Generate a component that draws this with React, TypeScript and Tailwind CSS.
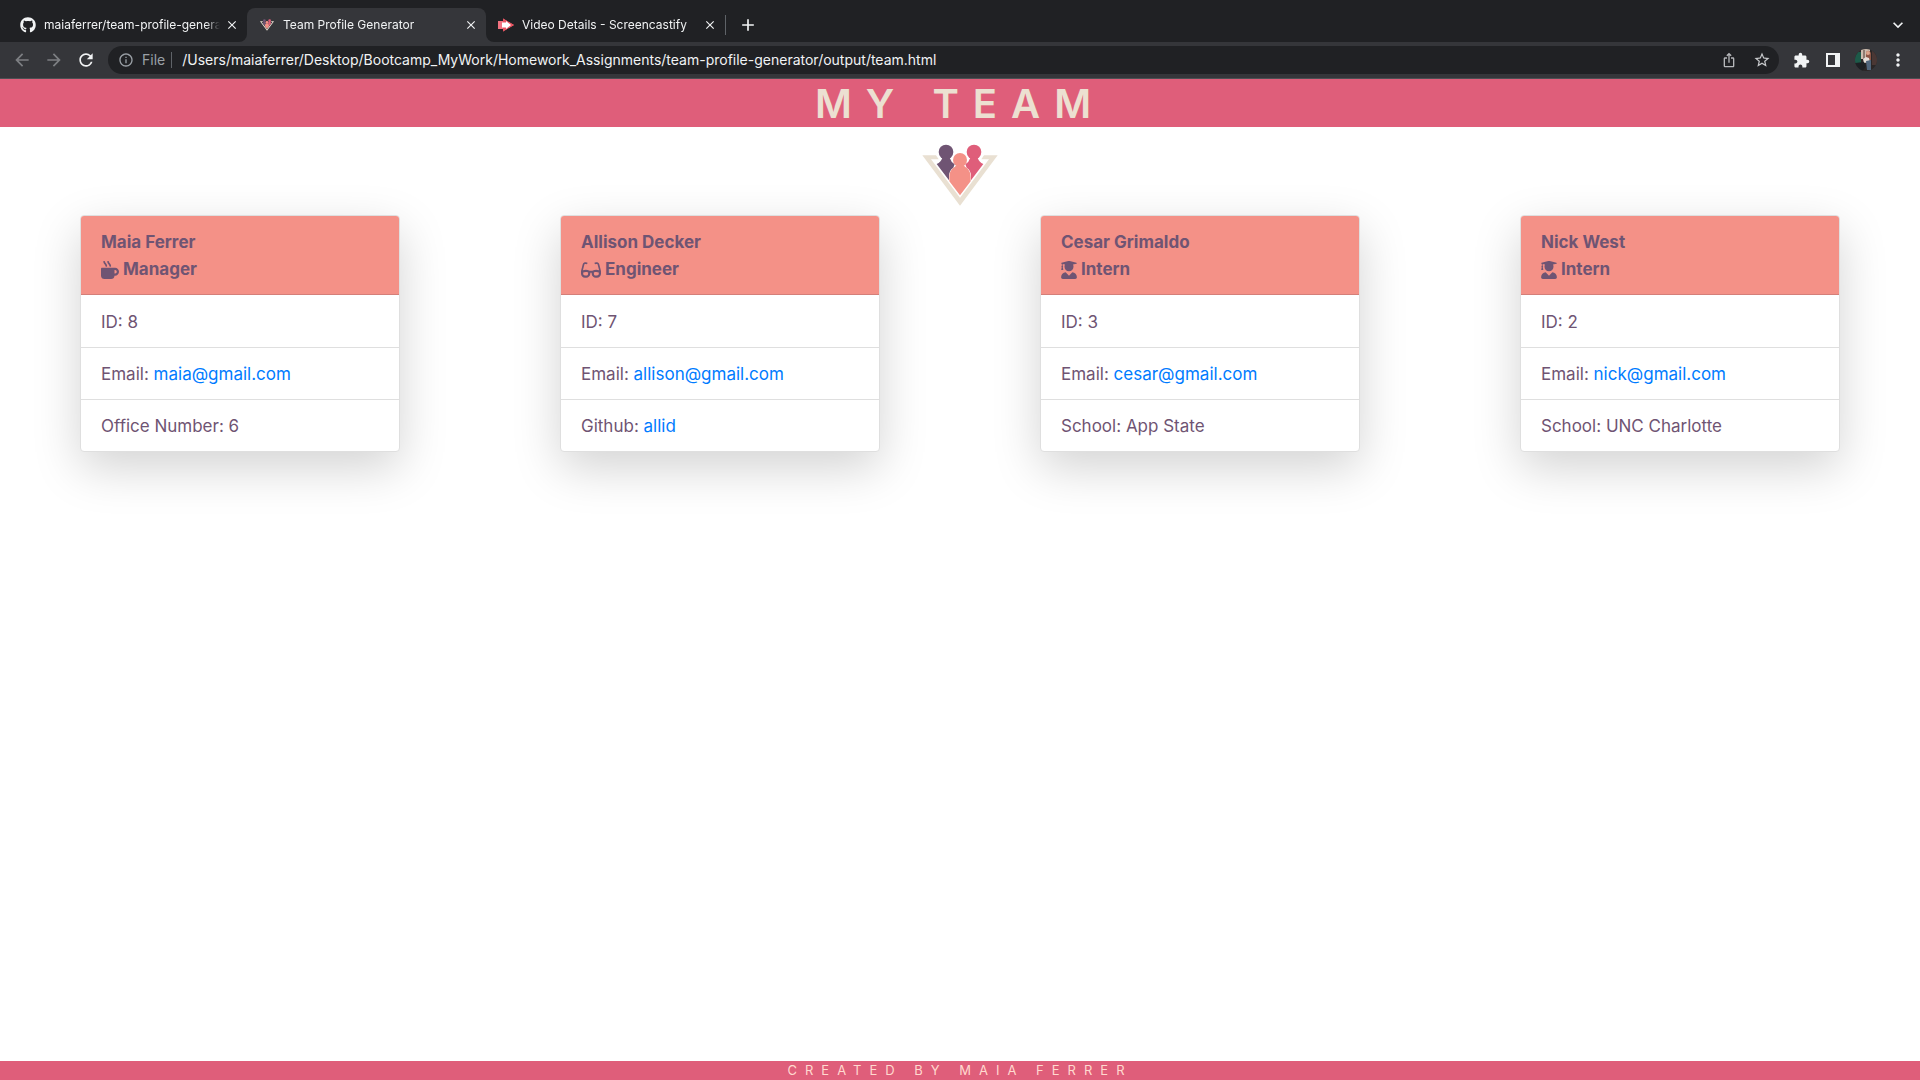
import React from "react";
import { FaGithub, FaMugHot, FaGlasses, FaUserGraduate } from "react-icons/fa";
import {
  MdAdd,
  MdArrowBack,
  MdArrowForward,
  MdClose,
  MdExtension,
  MdInfoOutline,
  MdIosShare,
  MdKeyboardArrowDown,
  MdMoreVert,
  MdRefresh,
  MdStarOutline,
} from "react-icons/md";

type Member = {
  name: string;
  role: "Manager" | "Engineer" | "Intern";
  id: number;
  email: string;
  label: string;
  value: string;
  link?: boolean;
};

const members: Member[] = [
  { name: "Maia Ferrer", role: "Manager", id: 8, email: "maia@gmail.com", label: "Office Number", value: "6" },
  { name: "Allison Decker", role: "Engineer", id: 7, email: "allison@gmail.com", label: "Github", value: "allid", link: true },
  { name: "Cesar Grimaldo", role: "Intern", id: 3, email: "cesar@gmail.com", label: "School", value: "App State" },
  { name: "Nick West", role: "Intern", id: 2, email: "nick@gmail.com", label: "School", value: "UNC Charlotte" },
];

const roleIcons = {
  Manager: <FaMugHot className="h-[18px] w-[18px]" />,
  Engineer: <FaGlasses className="h-[18px] w-5" />,
  Intern: <FaUserGraduate className="h-[18px] w-4" />,
};

function TeamLogo({ className }: { className: string }) {
  return (
    <svg viewBox="420 200 240 192" className={className} aria-hidden="true">
      <path
        d="M427 237H468L476 249H453L540 364L627 249H604L612 237H653L540 388Z"
        fill="#e9e0d2"
      />
      <circle cx="498" cy="227" r="22" fill="#6f5473" />
      <path d="M470 263Q483 257 487 244H509Q513 257 524 264L520 274Q507 282 507 300V312Z" fill="#6f5473" />
      <circle cx="582" cy="227" r="22" fill="#df5e7a" />
      <path d="M610 263Q597 257 593 244H571Q567 257 556 264L560 274Q573 282 573 300V312Z" fill="#df5e7a" />
      <circle cx="540" cy="251" r="21" fill="#f49187" />
      <path
        d="M529 267C525 274 508 277 508 303V315L540 357L572 315V303C572 277 555 274 551 267Z"
        fill="#f49187"
      />
    </svg>
  );
}

function ScreencastIcon() {
  return (
    <svg viewBox="0 0 16 16" className="size-4" aria-hidden="true">
      <path d="M0 4h5V1.500L16 8 5 14.500V12H0Z" fill="#f27280" />
      <path d="M5 1.500L16 8 5 14.500Z" fill="#e8525f" />
      <path d="M4 5.500h4V4l5 4-5 4v-1.500H4Z" fill="#fff" />
    </svg>
  );
}

function Avatar() {
  return (
    <svg viewBox="0 0 22 22" className="size-[22px] rounded-full" aria-hidden="true">
      <rect width="22" height="22" fill="#2b2626" />
      <rect y="3" width="6" height="11" fill="#1d5a49" />
      <rect x="6" width="9" height="10" fill="#cdbcae" />
      <rect x="8" y="1" width="2" height="9" fill="#8d7a70" />
      <path d="M11 3q3-3 5 1v7h-5z" fill="#8e5646" />
      <circle cx="13" cy="4" r="2" fill="#dba48c" />
      <path d="M8 10l3-2 3 1 1 4-6 1z" fill="#e6ded8" />
      <path d="M11 12l5-1v10h-4z" fill="#50657c" />
      <path d="M0 14l9-1 2 4-4 6H0z" fill="#1d2024" />
      <rect x="17" y="2" width="5" height="14" fill="#4a3734" />
    </svg>
  );
}

function Tab({ icon, title, active = false }: { icon: React.ReactNode; title: string; active?: boolean }) {
  return (
    <div
      className={
        active
          ? "relative flex h-[34px] w-[239px] items-center rounded-t-lg bg-[#35363a] pl-3 pr-[7px]"
          : "relative flex h-[34px] w-[239px] items-center pl-3 pr-[7px]"
      }
    >
      {active && (
        <>
          <span className="absolute bottom-0 -left-2 size-2 bg-[#35363a]">
            <span className="block size-2 rounded-br-lg bg-[#202124]" />
          </span>
          <span className="absolute bottom-0 -right-2 size-2 bg-[#35363a]">
            <span className="block size-2 rounded-bl-lg bg-[#202124]" />
          </span>
        </>
      )}
      <button type="button" className="flex min-w-0 flex-1 items-center gap-2 text-left">
        <span className="flex size-4 shrink-0 items-center justify-center">{icon}</span>
        <span className="min-w-0 flex-1 whitespace-nowrap text-xs mask-r-from-92%">{title}</span>
      </button>
      <button type="button" aria-label={`Close ${title}`} className="ml-1 flex size-4 items-center justify-center">
        <MdClose className="size-3.5" />
      </button>
    </div>
  );
}

function BrowserChrome() {
  return (
    <div className="bg-[#202124] text-[#f1f3f4]">
      <div className="flex h-[42px] items-end pl-2 pr-3">
        <Tab icon={<FaGithub className="size-4" />} title="maiaferrer/team-profile-genera" />
        <Tab active icon={<TeamLogo className="h-3 w-4" />} title="Team Profile Generator" />
        <Tab icon={<ScreencastIcon />} title="Video Details - Screencastify" />
        <div className="flex h-[34px] flex-1 items-center">
          <span className="h-5 w-px bg-[#5f6368]" />
          <button type="button" aria-label="New tab" className="ml-3 flex size-5 items-center justify-center">
            <MdAdd className="size-5" />
          </button>
          <button type="button" aria-label="Search tabs" className="ml-auto flex size-5 items-center justify-center">
            <MdKeyboardArrowDown className="size-5" />
          </button>
        </div>
      </div>
      <div className="flex h-[37px] items-center border-b border-[#4e4f53] bg-[#35363a] pl-3 pr-3">
        <div className="flex gap-3">
          <button type="button" aria-label="Back" className="text-[#7d7f83]">
            <MdArrowBack className="size-5" />
          </button>
          <button type="button" aria-label="Forward" className="text-[#7d7f83]">
            <MdArrowForward className="size-5" />
          </button>
          <button type="button" aria-label="Reload">
            <MdRefresh className="size-5" />
          </button>
        </div>
        <div className="ml-3 flex h-7 min-w-0 flex-1 items-center rounded-full bg-[#202124] pl-2.5 pr-2">
          <MdInfoOutline className="size-4 text-[#9aa0a6]" />
          <label htmlFor="address" className="ml-2 text-[14px] leading-5 text-[#9aa0a6]">
            File
          </label>
          <span className="ml-1.5 h-4 w-px bg-[#5f6368]" />
          <input
            id="address"
            type="text"
            defaultValue="/Users/maiaferrer/Desktop/Bootcamp_MyWork/Homework_Assignments/team-profile-generator/output/team.html"
            className="ml-2.5 min-w-0 flex-1 bg-transparent text-[14px] leading-5 outline-none"
          />
          <button type="button" aria-label="Share" className="text-[#b5b7ba]">
            <MdIosShare className="size-4" />
          </button>
          <button type="button" aria-label="Bookmark" className="ml-4 text-[#c8cacd]">
            <MdStarOutline className="size-[18px]" />
          </button>
        </div>
        <div className="ml-3 flex items-center gap-3">
          <button type="button" aria-label="Extensions" className="flex size-5 items-center justify-center">
            <MdExtension className="size-[17px]" />
          </button>
          <button type="button" aria-label="Side panel" className="flex size-5 items-center justify-center">
            <svg viewBox="0 0 14 14" className="size-3.5" fill="currentColor" fillRule="evenodd" aria-hidden="true">
              <path d="M0 0H14V14H0ZM2 2V12H9V2Z" />
            </svg>
          </button>
          <button type="button" aria-label="Profile">
            <Avatar />
          </button>
          <button type="button" aria-label="Menu" className="-ml-px">
            <MdMoreVert className="size-5" />
          </button>
        </div>
      </div>
    </div>
  );
}

function MemberCard({ member }: { member: Member }) {
  return (
    <article className="mx-20 rounded border border-[#dfdfdf] bg-white text-[17px] leading-[27px] shadow-[0_16px_48px_rgba(0,0,0,0.175)]">
      <header className="rounded-t-[3px] border-b border-[#d47f79] bg-[#f49187] px-5 pt-[13px] pb-[11px] font-bold">
        <h2>{member.name}</h2>
        <p className="flex items-center gap-1">
          {roleIcons[member.role]}
          {member.role}
        </p>
      </header>
      <ul className="divide-y divide-[#dfdfdf] pt-px">
        <li className="px-5 pt-[13px] pb-[11px]">ID: {member.id}</li>
        <li className="px-5 pt-[13px] pb-[11px]">
          Email:{" "}
          <a href={`mailto:${member.email}`} className="text-[#007bff]">
            {member.email}
          </a>
        </li>
        <li className="px-5 pt-[13px] pb-[11px]">
          {member.label}:{" "}
          {member.link ? (
            <a href={`https://github.com/${member.value}`} className="text-[#007bff]">
              {member.value}
            </a>
          ) : (
            member.value
          )}
        </li>
      </ul>
    </article>
  );
}

export default function App() {
  return (
    <div className="flex min-h-screen flex-col bg-white font-['Inter',sans-serif] text-[#6f5473]">
      <BrowserChrome />
      <header className="bg-[#df5e7a] pt-0.5 text-center text-[#ece0d1]">
        <h1 className="text-[40px] font-semibold leading-[46px] tracking-[14px]">MY TEAM</h1>
      </header>
      <main className="flex-1">
        <div className="flex justify-center pt-4 pb-2">
          <TeamLogo className="h-16 w-20" />
        </div>
        <section className="grid grid-cols-4">
          {members.map((m) => (
            <MemberCard key={m.name} member={m} />
          ))}
        </section>
      </main>
      <footer className="bg-[#df5e7a] text-center text-[13px] leading-[19px] tracking-[8px] text-[#ffd9cf]">
        CREATED BY MAIA FERRER
      </footer>
    </div>
  );
}
